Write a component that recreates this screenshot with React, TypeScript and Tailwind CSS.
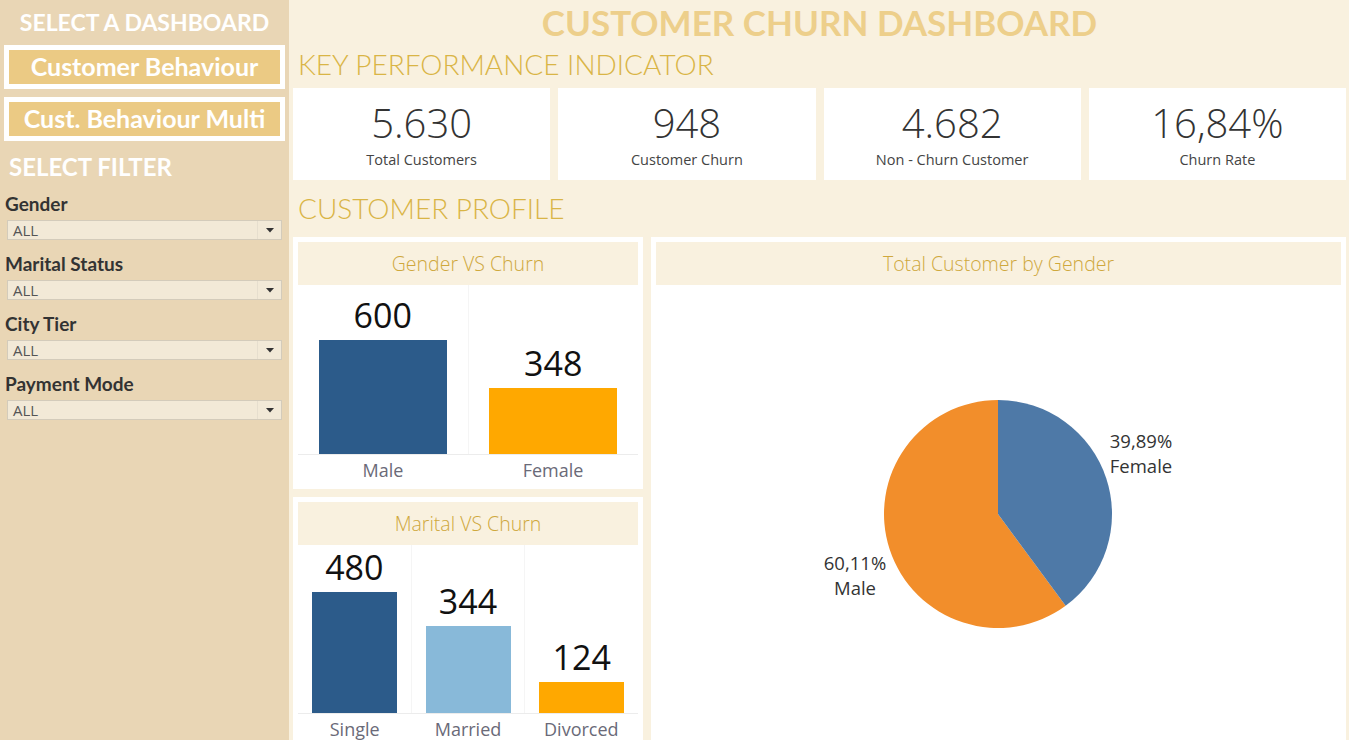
import React from "react";

const SANS = "font-['Open_Sans',sans-serif]";
const LATO = "font-['Lato',sans-serif]";

function Dropdown() {
  return (
    <div className="mx-[7px] mt-[3px] flex h-[20px] items-center border border-[#d3cbbb] bg-[#f2e9d7]">
      <div className={`flex-1 pl-[5px] text-[15px] leading-none text-[#555] ${SANS}`}>ALL</div>
      <div className="flex h-full w-[24px] items-center justify-center border-l border-[#e6dece]">
        <svg width="8" height="5" viewBox="0 0 8 5">
          <path d="M0 0 L8 0 L4 4.5 Z" fill="#333" />
        </svg>
      </div>
    </div>
  );
}

function Filter({ label }: { label: string }) {
  return (
    <div className="mb-[11px]">
      <div className={`flex h-[26px] items-center pl-[5px] text-[19px] font-bold text-[#333] ${LATO}`}>{label}</div>
      <Dropdown />
    </div>
  );
}

function Kpi({ value, label }: { value: string; label: string }) {
  return (
    <div className="flex flex-1 flex-col items-center bg-white pt-[12px]">
      <div className={`text-[40px] font-light leading-[46px] text-[#333] ${SANS}`}>{value}</div>
      <div className={`mt-[4px] text-[14.5px] leading-[20px] text-[#444] ${SANS}`}>{label}</div>
    </div>
  );
}

type Bar = { label: string; value: number; color: string };

function BarPanel({
  title,
  bars,
  max,
  maxH,
  barW,
  plotH,
}: {
  title: string;
  bars: Bar[];
  max: number;
  maxH: number;
  barW: number;
  plotH: number;
}) {
  return (
    <div className="flex h-[252px] shrink-0 flex-col bg-white p-[5px]">
      <div className={`flex h-[43px] shrink-0 items-center justify-center bg-[#f9f1df] text-[19.5px] font-light text-[#cfa83d] ${SANS}`}>
        {title}
      </div>
      <div className="flex shrink-0 items-end border-b border-[#ececec]" style={{ height: plotH }}>
        {bars.map((b, i) => (
          <div
            key={b.label}
            className={`flex h-full flex-1 flex-col items-center justify-end ${i > 0 ? "border-l border-[#f5f5f5]" : ""}`}
          >
            <div className={`mb-[5px] text-[34px] leading-[40px] text-[#111] ${SANS}`}>{b.value}</div>
            <div style={{ width: barW, height: Math.round((b.value / max) * maxH), backgroundColor: b.color }} />
          </div>
        ))}
      </div>
      <div className="flex shrink-0">
        {bars.map((b) => (
          <div key={b.label} className={`flex-1 pt-[3px] text-center text-[18px] leading-[24px] text-[#6a6a78] ${SANS}`}>
            {b.label}
          </div>
        ))}
      </div>
    </div>
  );
}

function PiePanel() {
  const cx = 347;
  const cy = 229;
  const r = 114;
  const ang = (-90 + 0.3989 * 360) * (Math.PI / 180);
  const ex = cx + r * Math.cos(ang);
  const ey = cy + r * Math.sin(ang);
  const blue = `M${cx} ${cy} L${cx} ${cy - r} A${r} ${r} 0 0 1 ${ex} ${ey} Z`;
  const orange = `M${cx} ${cy} L${ex} ${ey} A${r} ${r} 0 1 1 ${cx} ${cy - r} Z`;
  return (
    <div className="flex h-[520px] flex-1 flex-col bg-white p-[5px]">
      <div className={`flex h-[43px] shrink-0 items-center justify-center bg-[#f9f1df] text-[19.5px] font-light text-[#cfa83d] ${SANS}`}>
        Total Customer by Gender
      </div>
      <svg width="685" height="455" viewBox="5 0 685 455" className="block shrink-0">
        <path d={orange} fill="#f28e2b" />
        <path d={blue} fill="#4e79a7" />
        <g fontFamily="'Open Sans', sans-serif" fontSize="18.5" fill="#333" textAnchor="middle">
          <text x={490} y={163}>39,89%</text>
          <text x={490} y={188}>Female</text>
          <text x={204} y={285}>60,11%</text>
          <text x={204} y={310}>Male</text>
        </g>
      </svg>
    </div>
  );
}

export default function App() {
  return (
    <div className="flex h-[740px] w-[1349px] overflow-hidden bg-[#f9f1df]">
      {/* Sidebar */}
      <div className="w-[289px] shrink-0 bg-[#e9d6b5]">
        <div className={`flex h-[44px] items-center justify-center text-[23px] font-bold text-white ${LATO}`}>
          SELECT A DASHBOARD
        </div>
        <div className="mx-[4px] mt-[1px] flex h-[44px] items-center justify-center border-[5px] border-white bg-[#ebca84]">
          <span className={`text-[25px] font-bold text-white ${LATO}`}>Customer Behaviour</span>
        </div>
        <div className="mx-[4px] mt-[8px] flex h-[44px] items-center justify-center border-[5px] border-white bg-[#ebca84]">
          <span className={`text-[25px] font-bold text-white ${LATO}`}>Cust. Behaviour Multi</span>
        </div>
        <div className={`flex h-[50px] items-center pl-[9px] pt-[2px] text-[24px] font-bold text-white ${LATO}`}>
          SELECT FILTER
        </div>
        <Filter label="Gender" />
        <Filter label="Marital Status" />
        <Filter label="City Tier" />
        <Filter label="Payment Mode" />
      </div>

      {/* Main */}
      <div className="flex flex-1 flex-col pl-[4px] pr-[3px]">
        <div className={`flex h-[44px] shrink-0 items-center justify-center text-[35px] font-bold text-[#edcf8b] ${LATO}`}>
          CUSTOMER CHURN DASHBOARD
        </div>
        <div className={`flex h-[44px] shrink-0 items-center pb-[5px] pl-[5px] text-[28px] font-light text-[#d9b546] ${LATO}`}>
          KEY PERFORMANCE INDICATOR
        </div>
        <div className="flex h-[92px] shrink-0 gap-[8px]">
          <Kpi value="5.630" label="Total Customers" />
          <Kpi value="948" label="Customer Churn" />
          <Kpi value="4.682" label="Non - Churn Customer" />
          <Kpi value="16,84%" label="Churn Rate" />
        </div>
        <div className={`flex h-[57px] shrink-0 items-center pb-[1px] pl-[5px] text-[28px] font-light text-[#d9b546] ${LATO}`}>
          CUSTOMER PROFILE
        </div>
        <div className="flex shrink-0 gap-[8px]">
          <div className="flex w-[350px] shrink-0 flex-col gap-[8px]">
            <BarPanel
              title="Gender VS Churn"
              max={600}
              maxH={114}
              barW={128}
              plotH={170}
              bars={[
                { label: "Male", value: 600, color: "#2c5b8a" },
                { label: "Female", value: 348, color: "#ffa800" },
              ]}
            />
            <BarPanel
              title="Marital VS Churn"
              max={480}
              maxH={121}
              barW={85}
              plotH={169}
              bars={[
                { label: "Single", value: 480, color: "#2c5b8a" },
                { label: "Married", value: 344, color: "#88b9d9" },
                { label: "Divorced", value: 124, color: "#ffa800" },
              ]}
            />
          </div>
          <PiePanel />
        </div>
      </div>
    </div>
  );
}
